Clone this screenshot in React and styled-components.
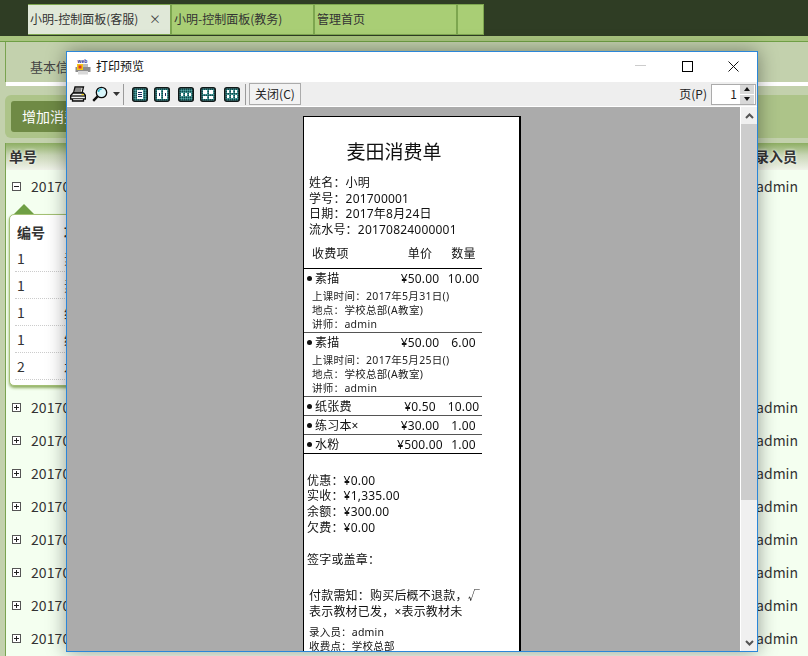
import React from "react";
import styled, { createGlobalStyle } from "styled-components";

const cjk = `"Noto Sans CJK SC", "Noto Sans", sans-serif`;
const COLON = "\uFF1A";
const COMMA = "\uFF0C";

const Global = createGlobalStyle`
  html, body { margin: 0; padding: 0; background: #c5d2b0; }
  * { box-sizing: border-box; }
  body { font-family: ${cjk}; }
`;

const Page = styled.div`
  position: relative;
  width: 808px;
  height: 656px;
  overflow: hidden;
  background: #c3d1ad;
`;
const TopBar = styled.div`
  height: 36px;
  background: #2f3d24;
  padding: 4px 0 0 28px;
  display: flex;
`;
const Tab = styled.div`
  width: ${(p) => p.$w}px;
  height: 31px;
  background: ${(p) => (p.$active ? "#e0e8d8" : "#a9ce75")};
  border: 1px solid #7da64f;
  border-left-width: ${(p) => (p.$active ? 0 : 1)}px;
  color: #333;
  font-size: 12px;
  line-height: 27px;
  padding-left: 2px;
  display: flex;
  justify-content: space-between;
  white-space: nowrap;
`;
const TabClose = styled.span`
  font-size: 12px;
  color: #444;
  margin-right: 9px;
`;
const Band = styled.div`
  height: 6px;
  background: #a8c47e;
  border-bottom: 1px solid #6f9f45;
`;
const InfoPanel = styled.div`
  height: 40px;
  margin-left: 5px;
  border-left: 1.5px solid #7aa350;
  padding: 13px 0 0 24px;
  font-size: 13px;
  line-height: 24px;
  color: #444;
`;
const Stripe = styled.div`
  height: 4px;
  margin-left: 6px;
  background: #fff;
`;
const ToolStrip = styled.div`
  height: 57px;
  padding: 9px 0 5px 5px;
`;
const ToolInner = styled.div`
  height: 43px;
  background: #adc489;
  border-radius: 6px 0 0 6px;
  padding: 6px;
`;
const ActionButton = styled.div`
  width: 90px;
  height: 31px;
  background: #6f8a45;
  border-radius: 3px;
  color: #fff;
  font-size: 14px;
  line-height: 30px;
  padding-left: 11px;
  white-space: nowrap;
`;
const Grid = styled.div`
  margin-left: 5px;
  border-left: 1.5px solid #7aa350;
  background: #f4fff0;
  height: 513px;
`;
const GridHead = styled.div`
  height: 27px;
  display: flex;
  justify-content: space-between;
  padding: 0 11px 0 3px;
  font-size: 14px;
  font-weight: 700;
  line-height: 27px;
  color: #333;
  background: linear-gradient(#8dae62, #c9d6b6 45%, #f0f3ea);
  text-shadow: 0 0 3px #fff;
`;
const GridRow = styled.div`
  height: 33px;
  display: flex;
  align-items: center;
  padding: 0 10px 0 6px;
  font-size: 14px;
  color: #333;
`;
const Expander = styled.span`
  width: 9px;
  height: 9px;
  border: 1px solid #555;
  background: #fff;
  position: relative;
  margin-right: 10px;
  flex: none;
  &::before {
    content: "";
    position: absolute;
    left: 1px;
    top: 3px;
    width: 5px;
    height: 1px;
    background: #222;
  }
  &::after {
    content: "";
    display: ${(p) => (p.$open ? "none" : "block")};
    position: absolute;
    left: 3px;
    top: 1px;
    width: 1px;
    height: 5px;
    background: #222;
  }
`;
const RowNo = styled.span`
  flex: 1;
  letter-spacing: 0.1px;
  margin-bottom: 2px;
`;
const RowUser = styled.span`
  margin-bottom: 2px;
`;
const DetailSlot = styled.div`
  height: 188px;
  padding: 11px 0 0 3px;
  position: relative;
`;
const Caret = styled.div`
  position: absolute;
  left: 8px;
  top: 1px;
  width: 0;
  height: 0;
  border-left: 10px solid transparent;
  border-right: 10px solid transparent;
  border-bottom: 10px solid #6f9f45;
`;
const DetailCard = styled.div`
  width: 200px;
  height: 172px;
  background: #fff;
  border: 1px solid #a3c074;
  border-radius: 5px;
  box-shadow: 0 2px 3px #8fae62;
  padding: 3px 5px 0 5px;
  font-size: 14px;
  color: #333;
`;
const DetailRow = styled.div`
  height: 27px;
  display: flex;
  line-height: ${(p) => (p.$head ? 29 : 26)}px;
  font-weight: ${(p) => (p.$head ? 700 : 400)};
  border-bottom: ${(p) => (p.$head ? "0" : "1px dotted #ccc")};
  padding-left: 2px;
`;
const DetailNo = styled.span`
  width: 47px;
  flex: none;
`;

const Modal = styled.div`
  position: absolute;
  left: 66px;
  top: 51px;
  width: 692px;
  height: 601px;
  background: #fff;
  border: 1px solid #2b86d9;
  box-shadow: 0 0 18px rgba(0, 0, 0, 0.4);
  display: flex;
  flex-direction: column;
  overflow: hidden;
`;
const TitleBar = styled.div`
  height: 30px;
  flex: none;
  display: flex;
  align-items: center;
  padding: 0 1px 0 8px;
  background: #fff;
  font-size: 12px;
  line-height: 26px;
  color: #111;
`;
const TitleText = styled.span`
  margin: 0 0 2px 5px;
  flex: 1;
`;
const WinButton = styled.div`
  width: 46px;
  height: 30px;
  padding-bottom: 2px;
  display: flex;
  align-items: center;
  justify-content: center;
`;
const PreviewBar = styled.div`
  height: 24px;
  flex: none;
  background: #eeeeee;
  display: flex;
  align-items: center;
  padding: 0 1px 0 3px;
  font-size: 12px;
  color: #222;
`;
const BarIcon = styled.span`
  display: flex;
  margin-right: ${(p) => p.$mr ?? 0}px;
`;
const Sep = styled.span`
  width: 1px;
  height: 21px;
  background: #9a9a9a;
  margin: 0 ${(p) => p.$r ?? 7}px 0 ${(p) => p.$l ?? 3}px;
`;
const CloseBtn = styled.div`
  width: 52px;
  height: 22px;
  border: 1px solid #ababab;
  text-align: center;
  line-height: 19px;
  background: #f2f2f2;
  white-space: nowrap;
`;
const Spacer = styled.div`
  flex: 1;
`;
const PageLabel = styled.span`
  margin-right: 4px;
  padding-bottom: 1px;
`;
const Spin = styled.div`
  width: 45px;
  height: 21px;
  border: 1px solid #ababab;
  background: #fff;
  display: flex;
  justify-content: flex-end;
  padding-right: 1px;
  line-height: 17px;
`;
const SpinValue = styled.span`
  margin-right: 3px;
`;
const SpinArrows = styled.div`
  width: 14px;
  display: flex;
  flex-direction: column;
  gap: 1px;
`;
const SpinArrow = styled.div`
  flex: 1;
  background: #d8d8d8;
  display: flex;
  align-items: center;
  justify-content: center;
  &::before {
    content: "";
    border-left: 3px solid transparent;
    border-right: 3px solid transparent;
    border-${(p) => (p.$up ? "bottom" : "top")}: 4px solid #111;
  }
`;
const Preview = styled.div`
  flex: 1;
  min-height: 0;
  margin-top: 1px;
  display: flex;
`;
const Viewport = styled.div`
  flex: 1;
  background: #ababab;
  padding: 9px 0 0 236px;
  overflow: hidden;
`;
const Scrollbar = styled.div`
  width: 17px;
  flex: none;
  border-left: 1px solid #fff;
  background: #f0f0f0;
  display: flex;
  flex-direction: column;
`;
const ScrollBtn = styled.div`
  height: 17px;
  flex: none;
  display: flex;
  align-items: center;
  justify-content: center;
  background: #f0f0f0;
`;
const ScrollThumb = styled.div`
  height: 376px;
  background: #cdcdcd;
`;
const Paper = styled.div`
  width: 218px;
  height: 560px;
  background: #fff;
  border-left: 1px solid #000;
  border-right: 2px solid #000;
  border-top: 1px solid #000;
  color: #111;
  font-family: "Noto Sans", "Noto Sans CJK SC", sans-serif;
  font-size: 12px;
  line-height: 15.67px;
  letter-spacing: 0.2px;
  white-space: nowrap;
  overflow: hidden;
`;
const PaperInk = styled.div`
  filter: blur(0.25px);
`;
const ReceiptTitle = styled.div`
  width: 180px;
  margin-top: 20px;
  text-align: center;
  font-size: 19px;
  line-height: 30px;
  letter-spacing: 0;
`;
const Block = styled.div`
  margin-top: ${(p) => p.$top ?? 0}px;
  padding-left: ${(p) => p.$left ?? 0}px;
  line-height: ${(p) => p.$lh ?? 15.67}px;
  font-size: ${(p) => p.$fs ?? 12}px;
`;
const ItemRow = styled.div`
  width: 178px;
  display: grid;
  grid-template-columns: 88px 50px 37px;
  height: ${(p) => p.$h ?? 18}px;
  line-height: ${(p) => (p.$h ?? 18) + 2}px;
  padding-left: 3px;
  text-align: center;
`;
const ItemName = styled.span`
  text-align: left;
  padding-left: ${(p) => p.$indent ?? 0}px;
`;
const Bullet = styled.span`
  display: inline-block;
  width: 5px;
  height: 5px;
  border-radius: 50%;
  background: #111;
  margin: 0 3px 1px 0;
  vertical-align: middle;
`;
const Item = styled.div`
  width: 178px;
  height: ${(p) => p.$h ?? 19}px;
  border-top: ${(p) => (p.$soft ? "1.5px solid #555" : "1.5px solid #000")};
`;
const ItemSub = styled.div`
  padding: 2px 0 0 8px;
  font-size: 10.5px;
  line-height: 14px;
  letter-spacing: 0.3px;
  color: #222;
`;
const EndRule = styled.div`
  width: 178px;
  border-top: 1.5px solid #000;
`;

const Dither = () => (
  <defs>
    <pattern id="dither" width="2" height="2" patternUnits="userSpaceOnUse">
      <rect width="2" height="2" fill="#2f7f80" />
      <rect width="1" height="1" fill="#14484a" />
      <rect x="1" y="1" width="1" height="1" fill="#5a9f9e" />
    </pattern>
  </defs>
);

const LayoutIcon = ({ cells, marks = [], mr }) => (
  <BarIcon $mr={mr}>
    <svg width="16" height="15" viewBox="0 0 16 15">
      <Dither />
      <rect x="0.75" y="0.75" width="14.5" height="13.5" rx="2" fill="url(#dither)" stroke="#101818" strokeWidth="1.5" />
      {cells.map(([x, y, w, h], i) => (
        <rect key={i} x={x} y={y} width={w} height={h} fill="#fff" />
      ))}
      {marks.map(([x, y, w, h], i) => (
        <rect key={i} x={x} y={y} width={w} height={h} fill="#1c2e60" />
      ))}
    </svg>
  </BarIcon>
);

const PrinterIcon = () => (
  <BarIcon $mr={6}>
    <svg width="16" height="16" viewBox="0 0 16 16" fill="none" stroke="#0c0c0c" strokeWidth="1.3">
      <path d="M5 1h8.5l-1.5 6H3.5z" fill="#fff" />
      <path d="M5 3h6.5M4.6 5h6.4" strokeWidth="1" />
      <path d="M3 7h10.5l2 2.5v3.5H.7V9.5z" fill="#f2f2f2" />
      <path d="M.7 10h14.6" />
      <path d="M2.5 13v2h11v-2" fill="#cfcfcf" />
      <rect x="11.5" y="8" width="2.5" height="1.2" fill="#f0d020" stroke="none" />
    </svg>
  </BarIcon>
);

const MagnifierIcon = () => (
  <BarIcon $mr={5}>
    <svg width="16" height="16" viewBox="0 0 16 16" fill="none">
      <circle cx="9.5" cy="6.5" r="5.2" fill="#d8f6fb" stroke="#0c0c0c" strokeWidth="1.3" />
      <path d="M6.5 6c0-1.8 1.4-3 3.2-3" stroke="#35b8d0" strokeWidth="1.4" />
      <path d="M5.6 10.4L1.2 14.8" stroke="#0c0c0c" strokeWidth="2.4" />
    </svg>
  </BarIcon>
);

const TitleIcon = () => (
  <svg width="16" height="16" viewBox="0 0 16 16">
    <text x="2.5" y="4.4" fontSize="5" fontWeight="700" fill="#2a2a90" fontFamily="Liberation Sans, sans-serif">
      web
    </text>
    <rect x="3" y="5" width="10" height="3" fill="#bbb" />
    <rect x="0.5" y="8" width="15" height="5" fill="#8c8c8c" />
    <rect x="3" y="12" width="10" height="3.5" fill="#d8d8d8" />
    <rect x="2" y="5" width="6" height="6" fill="#f5c518" />
    <rect x="3.5" y="6.5" width="3" height="3" fill="#d8352a" />
  </svg>
);

const tabs = ["小明-控制面板(客服)", "小明-控制面板(教务)", "管理首页", ""];
const detail = [
  ["1", "素描"],
  ["1", "素描"],
  ["1", "纸张费"],
  ["1", "练习本×"],
  ["2", "水粉"],
];
const layouts = [
  { cells: [[5, 3, 6, 9]], marks: [[6, 5, 4, 1], [6, 7, 4, 1], [6, 9, 4, 1]], mr: 6 },
  { cells: [[3, 3, 4, 9], [9, 3, 4, 9]], marks: [[5, 6, 1, 3], [11, 6, 1, 3]], mr: 8 },
  { cells: [[3, 6, 2, 3], [7, 6, 2, 3], [11, 6, 2, 3]], mr: 6 },
  { cells: [[3, 3, 4, 4], [9, 3, 4, 4], [3, 9, 4, 3], [9, 9, 4, 3]], mr: 8 },
  { cells: [[3, 3, 2, 3], [7, 3, 2, 3], [11, 3, 2, 3], [3, 8, 2, 3], [7, 8, 2, 3], [11, 8, 2, 3]], mr: 0 },
];
const rowsBelow = 8;

const Lesson = ({ date }) => (
  <ItemSub>
    上课时间{COLON}{date}()<br />
    地点{COLON}学校总部(A教室)<br />
    讲师{COLON}admin
  </ItemSub>
);

export default function App() {
  return (
    <Page>
      <Global />
      <TopBar>
        {tabs.map((t, i) => (
          <Tab key={i} $w={i === 3 ? 27 : 143} $active={i === 0}>
            {t}
            {i === 0 && <TabClose>×</TabClose>}
          </Tab>
        ))}
      </TopBar>
      <Band />
      <InfoPanel>基本信息</InfoPanel>
      <Stripe />
      <ToolStrip>
        <ToolInner>
          <ActionButton>增加消费单</ActionButton>
        </ToolInner>
      </ToolStrip>
      <Grid>
        <GridHead>
          <span>单号</span>
          <span>录入员</span>
        </GridHead>
        <GridRow>
          <Expander $open />
          <RowNo>20170824000001</RowNo>
          <RowUser>admin</RowUser>
        </GridRow>
        <DetailSlot>
          <Caret />
          <DetailCard>
            <DetailRow $head>
              <DetailNo>编号</DetailNo>
              <span>项目</span>
            </DetailRow>
            {detail.map(([n, name], i) => (
              <DetailRow key={i}>
                <DetailNo>{n}</DetailNo>
                <span>{name}</span>
              </DetailRow>
            ))}
          </DetailCard>
        </DetailSlot>
        {Array.from({ length: rowsBelow }, (_, i) => (
          <GridRow key={i}>
            <Expander />
            <RowNo>2017082400000{i + 2}</RowNo>
            <RowUser>admin</RowUser>
          </GridRow>
        ))}
      </Grid>

      <Modal>
        <TitleBar>
          <TitleIcon />
          <TitleText>打印预览</TitleText>
          <WinButton>
            <svg width="12" height="2"><rect width="11" height="1" fill="#ccc" /></svg>
          </WinButton>
          <WinButton>
            <svg width="11" height="11" fill="none"><rect x="0.5" y="0.5" width="10" height="10" stroke="#000" /></svg>
          </WinButton>
          <WinButton>
            <svg width="11" height="11" stroke="#111"><path d="M0.5 0.5l10 10M10.5 0.5l-10 10" /></svg>
          </WinButton>
        </TitleBar>
        <PreviewBar>
          <PrinterIcon />
          <MagnifierIcon />
          <BarIcon>
            <svg width="7" height="4"><path d="M0 0h7l-3.5 4z" fill="#333" /></svg>
          </BarIcon>
          <Sep $r={8} />
          {layouts.map((l, i) => (
            <LayoutIcon key={i} cells={l.cells} marks={l.marks} mr={l.mr} />
          ))}
          <Sep $l={5} $r={3} />
          <CloseBtn>关闭(C)</CloseBtn>
          <Spacer />
          <PageLabel>页(P)</PageLabel>
          <Spin>
            <SpinValue>1</SpinValue>
            <SpinArrows>
              <SpinArrow $up />
              <SpinArrow />
            </SpinArrows>
          </Spin>
        </PreviewBar>
        <Preview>
          <Viewport>
            <Paper>
              <PaperInk>
                <ReceiptTitle>麦田消费单</ReceiptTitle>
                <Block $top={8} $left={5}>
                  姓名{COLON}小明<br />
                  学号{COLON}201700001<br />
                  日期{COLON}2017年8月24日<br />
                  流水号{COLON}20170824000001
                </Block>
                <ItemRow $h={30}>
                  <ItemName $indent={5}>收费项</ItemName>
                  <span>单价</span>
                  <span>数量</span>
                </ItemRow>
                <Item $h={64}>
                  <ItemRow>
                    <ItemName><Bullet />素描</ItemName>
                    <span>¥50.00</span>
                    <span>10.00</span>
                  </ItemRow>
                  <Lesson date="2017年5月31日" />
                </Item>
                <Item $h={64} $soft>
                  <ItemRow>
                    <ItemName><Bullet />素描</ItemName>
                    <span>¥50.00</span>
                    <span>6.00</span>
                  </ItemRow>
                  <Lesson date="2017年5月25日" />
                </Item>
                <Item $soft>
                  <ItemRow>
                    <ItemName><Bullet />纸张费</ItemName>
                    <span>¥0.50</span>
                    <span>10.00</span>
                  </ItemRow>
                </Item>
                <Item $soft>
                  <ItemRow>
                    <ItemName><Bullet />练习本×</ItemName>
                    <span>¥30.00</span>
                    <span>1.00</span>
                  </ItemRow>
                </Item>
                <Item $soft>
                  <ItemRow>
                    <ItemName><Bullet />水粉</ItemName>
                    <span>¥500.00</span>
                    <span>1.00</span>
                  </ItemRow>
                </Item>
                <EndRule />
                <Block $top={19} $left={3}>
                  优惠{COLON}¥0.00<br />
                  实收{COLON}¥1,335.00<br />
                  余额{COLON}¥300.00<br />
                  欠费{COLON}¥0.00
                </Block>
                <Block $top={17} $left={3}>签字或盖章{COLON}</Block>
                <Block $top={20} $left={5} $lh={16}>
                  付款需知{COLON}购买后概不退款{COMMA}√<br />
                  表示教材已发{COMMA}×表示教材未
                </Block>
                <Block $top={5} $left={5} $lh={14} $fs={10.5}>
                  录入员{COLON}admin<br />
                  收费点{COLON}学校总部
                </Block>
              </PaperInk>
            </Paper>
          </Viewport>
          <Scrollbar>
            <ScrollBtn>
              <svg width="9" height="6" fill="none" stroke="#555" strokeWidth="2"><path d="M1 5l3.5-3.5L8 5" /></svg>
            </ScrollBtn>
            <ScrollThumb />
            <Spacer />
            <ScrollBtn>
              <svg width="9" height="6" fill="none" stroke="#555" strokeWidth="2"><path d="M1 1l3.5 3.5L8 1" /></svg>
            </ScrollBtn>
          </Scrollbar>
        </Preview>
      </Modal>
    </Page>
  );
}
